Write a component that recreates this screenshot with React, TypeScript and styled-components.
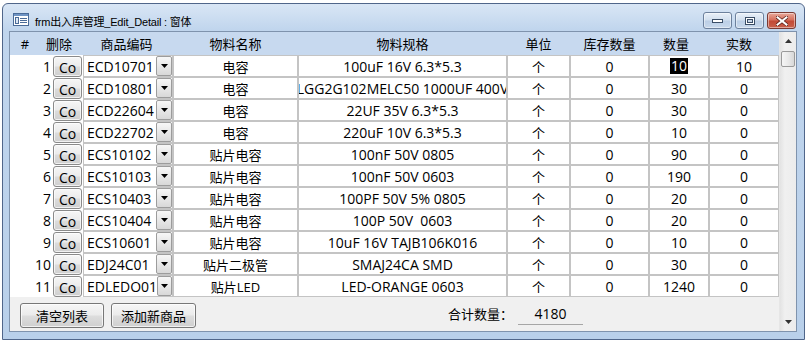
import React from "react";
import styled, { createGlobalStyle } from "styled-components";

const GlobalStyle = createGlobalStyle`
  html, body {
    margin: 0;
    padding: 0;
    background: #ffffff;
  }
  body {
    font-family: "Open Sans", "Noto Sans CJK SC", sans-serif;
    color: #000;
  }
`;

const FONT = `"Open Sans", "Noto Sans CJK SC", sans-serif`;

const Page = styled.div`
  width: 809px;
  height: 342px;
  box-sizing: border-box;
  padding: 3px 0 0 2px;
  overflow: hidden;
  background: #fff;
`;

const Window = styled.div`
  width: 803px;
  height: 337px;
  box-sizing: border-box;
  border: 1px solid #50668a;
  border-radius: 6px 6px 0 0;
  background: linear-gradient(to bottom, #d9e6f5 0px, #c0d5ed 26px, #b9d0ea 100%);
  padding: 0 7px 7px 6px;
  display: flex;
  flex-direction: column;
`;

const TitleBar = styled.div`
  height: 27px;
  display: flex;
  align-items: flex-start;
  padding-left: 4px;
`;

const TitleIcon = styled.svg`
  margin-top: 9px;
  flex: none;
`;

const TitleText = styled.div`
  font-family: "Liberation Sans", "Noto Sans CJK SC", sans-serif;
  font-size: 11px;
  letter-spacing: -0.2px;
  line-height: 16px;
  margin-top: 10px;
  margin-left: 6px;
  color: #000;
  flex: 1;
`;

const Controls = styled.div`
  display: flex;
  gap: 3px;
  margin-top: 8px;
  margin-right: 1px;
`;

const CtrlButton = styled.div<{ $close?: boolean }>`
  width: 29px;
  height: 17px;
  box-sizing: border-box;
  border: 1px solid ${(p) => (p.$close ? "#7a3a33" : "#6c809c")};
  border-radius: 3px;
  background: ${(p) =>
    p.$close
      ? "linear-gradient(to bottom, #e9a99b 0%, #d6705e 45%, #c24a36 55%, #c9604b 100%)"
      : "linear-gradient(to bottom, #e9f0f8 0%, #d3e0ef 45%, #bccfe6 55%, #c8d8eb 100%)"};
  box-shadow: inset 0 0 0 1px rgba(255, 255, 255, 0.45);
  display: flex;
  align-items: center;
  justify-content: center;
`;

const Client = styled.div`
  flex: 1;
  border: 1px solid #7f93ad;
  background: #f0f0f0;
  display: flex;
  overflow: hidden;
`;

const Main = styled.div`
  width: 769px;
  display: flex;
  flex-direction: column;
`;

const HeaderRow = styled.div`
  height: 23px;
  background: #c7d9ef;
  display: grid;
  grid-template-columns: 30px 38px 95px 125px 209px 63px 79px 60px 70px;
  align-items: center;
  font-size: 13px;
  line-height: 16px;
`;

const HeadCell = styled.div<{ $shift?: number }>`
  text-align: center;
  white-space: nowrap;
  transform: translateX(${(p) => p.$shift ?? 0}px);
`;

const Body = styled.div`
  background: #fff;
  display: flex;
  flex-direction: column;
`;

const Row = styled.div`
  height: 22px;
  display: grid;
  grid-template-columns: 42px 31px 90px 125px 209px 63px 79px 60px 70px;
`;

const NumCell = styled.div`
  display: flex;
  align-items: center;
  justify-content: flex-end;
  padding-right: 1px;
  font-size: 14px;
`;

const DelCell = styled.div`
  display: flex;
  align-items: center;
  padding-left: 1px;
`;

const CoButton = styled.div`
  width: 29px;
  height: 21px;
  box-sizing: border-box;
  border: 1px solid #8a8a8a;
  border-radius: 3px;
  background: linear-gradient(to bottom, #f6f6f6 0%, #ebebeb 48%, #dcdcdc 52%, #cfcfcf 100%);
  box-shadow: inset 0 0 0 1px rgba(255, 255, 255, 0.7);
  font-size: 14px;
  line-height: 19px;
  text-align: center;
  overflow: hidden;
  white-space: nowrap;
  padding-top: 1px;
`;

const Cell = styled.div<{ $cjk?: boolean }>`
  box-sizing: border-box;
  height: 22px;
  border: 1px solid #c4c4c4;
  display: flex;
  align-items: center;
  justify-content: center;
  white-space: pre;
  overflow: hidden;
  font-family: ${FONT};
  font-size: ${(p) => (p.$cjk ? "13px" : "14px")};
`;

const CodeCell = styled(Cell)`
  justify-content: flex-start;
`;

const CodeText = styled.div`
  flex: 1;
  padding-left: 3px;
`;

const DropBtn = styled.div`
  width: 16px;
  height: 20px;
  box-sizing: border-box;
  border: 1px solid #9c9c9c;
  border-radius: 2px;
  background: linear-gradient(to bottom, #f7f7f7 0%, #e8e8e8 50%, #d8d8d8 100%);
  display: flex;
  align-items: center;
  justify-content: center;
`;

const Selected = styled.span`
  background: #000;
  color: #fff;
  line-height: 16px;
  padding: 0 1px;
`;

const Footer = styled.div`
  flex: 1;
  display: flex;
  align-items: flex-start;
  padding: 6px 0 0 10px;
  background: #f0f0f0;
`;

const FormButton = styled.div<{ $w: number }>`
  width: ${(p) => p.$w}px;
  height: 25px;
  box-sizing: border-box;
  border: 1px solid #777;
  border-radius: 3px;
  background: linear-gradient(to bottom, #f6f6f6 0%, #ebebeb 48%, #dddddd 52%, #cfcfcf 100%);
  box-shadow: inset 0 0 0 1px rgba(255, 255, 255, 0.7);
  font-size: 13px;
  display: flex;
  align-items: center;
  justify-content: center;
  margin-right: 7px;
`;

const TotalLabel = styled.div`
  margin-left: 245px;
  height: 22px;
  line-height: 22px;
  font-size: 13px;
`;

const TotalValue = styled.div`
  width: 65px;
  height: 22px;
  box-sizing: border-box;
  margin-left: 5px;
  border-bottom: 1px solid #a6a6a6;
  font-size: 14px;
  display: flex;
  align-items: center;
  justify-content: center;
`;

const ScrollBar = styled.div`
  width: 17px;
  display: flex;
  flex-direction: column;
  background: linear-gradient(to right, #e3e3e3 0%, #f0f0f0 30%, #ececec 100%);
  border-left: 1px solid #e6e6e6;
  box-sizing: border-box;
`;

const ScrollArrow = styled.div`
  height: 18px;
  display: flex;
  align-items: center;
  justify-content: center;
`;

const Thumb = styled.div`
  height: 16px;
  margin: 1px 1px 0 1px;
  box-sizing: border-box;
  border: 1px solid #9a9a9a;
  border-radius: 2px;
  background: linear-gradient(to right, #f5f5f5 0%, #e9e9e9 50%, #d8d8d8 100%);
`;

const Track = styled.div`
  flex: 1;
`;

type Item = {
  code: string;
  name: string;
  spec: string;
  stock: string;
  qty: string;
  real: string;
};

const items: Item[] = [
  { code: "ECD10701", name: "电容", spec: "100uF 16V 6.3*5.3", stock: "0", qty: "10", real: "10" },
  { code: "ECD10801", name: "电容", spec: "LGG2G102MELC50 1000UF 400V", stock: "0", qty: "30", real: "0" },
  { code: "ECD22604", name: "电容", spec: "22UF 35V 6.3*5.3", stock: "0", qty: "30", real: "0" },
  { code: "ECD22702", name: "电容", spec: "220uF 10V 6.3*5.3", stock: "0", qty: "10", real: "0" },
  { code: "ECS10102", name: "贴片电容", spec: "100nF 50V 0805", stock: "0", qty: "90", real: "0" },
  { code: "ECS10103", name: "贴片电容", spec: "100nF 50V 0603", stock: "0", qty: "190", real: "0" },
  { code: "ECS10403", name: "贴片电容", spec: "100PF 50V 5% 0805", stock: "0", qty: "20", real: "0" },
  { code: "ECS10404", name: "贴片电容", spec: "100P 50V  0603", stock: "0", qty: "20", real: "0" },
  { code: "ECS10601", name: "贴片电容", spec: "10uF 16V TAJB106K016", stock: "0", qty: "10", real: "0" },
  { code: "EDJ24C01", name: "贴片二极管", spec: "SMAJ24CA SMD", stock: "0", qty: "30", real: "0" },
  { code: "EDLEDO01", name: "贴片LED", spec: "LED-ORANGE 0603", stock: "0", qty: "1240", real: "0" },
];

const headers: { label: string; shift?: number }[] = [
  { label: "#" },
  { label: "删除" },
  { label: "商品编码", shift: 1 },
  { label: "物料名称" },
  { label: "物料规格" },
  { label: "单位" },
  { label: "库存数量" },
  { label: "数量", shift: -3 },
  { label: "实数", shift: -5 },
];

function FormIcon() {
  return (
    <TitleIcon width="16" height="13" viewBox="0 0 16 13">
      <rect x="0.5" y="0.5" width="15" height="12" fill="#ffffff" stroke="#4a6b98" />
      <rect x="1" y="1" width="14" height="2" fill="#6f94c4" />
      <rect x="2.5" y="4.5" width="3" height="6" fill="#dfe8f4" stroke="#4a6b98" />
      <line x1="7" y1="5.5" x2="14" y2="5.5" stroke="#4a6b98" />
      <line x1="7" y1="7.5" x2="14" y2="7.5" stroke="#4a6b98" />
      <line x1="7" y1="9.5" x2="14" y2="9.5" stroke="#4a6b98" />
    </TitleIcon>
  );
}

function Triangle({ dir = "down", color = "#000" }: { dir?: "up" | "down"; color?: string }) {
  return (
    <svg width="7" height="4" viewBox="0 0 7 4">
      {dir === "down" ? (
        <polygon points="0,0 7,0 3.5,4" fill={color} />
      ) : (
        <polygon points="0,4 7,4 3.5,0" fill={color} />
      )}
    </svg>
  );
}

export default function App() {
  return (
    <>
      <GlobalStyle />
      <Page>
        <Window>
          <TitleBar>
            <FormIcon />
            <TitleText>frm出入库管理_Edit_Detail : 窗体</TitleText>
            <Controls>
              <CtrlButton>
                <svg width="11" height="4" viewBox="0 0 11 4">
                  <rect x="0.5" y="0.5" width="10" height="3" fill="#fff" stroke="#3a4d66" />
                </svg>
              </CtrlButton>
              <CtrlButton>
                <svg width="10" height="8" viewBox="0 0 10 8">
                  <rect x="0.5" y="0.5" width="9" height="7" fill="#fff" stroke="#3a4d66" />
                  <rect x="2.5" y="2.5" width="5" height="3" fill="#c7d6e8" stroke="#3a4d66" />
                </svg>
              </CtrlButton>
              <CtrlButton $close>
                <svg width="12" height="10" viewBox="0 0 12 10">
                  <path
                    d="M1 1 L11 9 M11 1 L1 9"
                    stroke="#5a1f18"
                    strokeWidth="3.4"
                    strokeLinecap="square"
                  />
                  <path
                    d="M1.5 1.4 L10.5 8.6 M10.5 1.4 L1.5 8.6"
                    stroke="#ffffff"
                    strokeWidth="2"
                    strokeLinecap="square"
                  />
                </svg>
              </CtrlButton>
            </Controls>
          </TitleBar>
          <Client>
            <Main>
              <HeaderRow>
                {headers.map((h) => (
                  <HeadCell key={h.label} $shift={h.shift}>
                    {h.label}
                  </HeadCell>
                ))}
              </HeaderRow>
              <Body>
                {items.map((it, i) => (
                  <Row key={it.code}>
                    <NumCell>{i + 1}</NumCell>
                    <DelCell>
                      <CoButton>Co</CoButton>
                    </DelCell>
                    <CodeCell>
                      <CodeText>{it.code}</CodeText>
                      <DropBtn>
                        <Triangle />
                      </DropBtn>
                    </CodeCell>
                    <Cell $cjk>{it.name}</Cell>
                    <Cell>{it.spec}</Cell>
                    <Cell $cjk>个</Cell>
                    <Cell>{it.stock}</Cell>
                    <Cell>{i === 0 ? <Selected>{it.qty}</Selected> : it.qty}</Cell>
                    <Cell>{it.real}</Cell>
                  </Row>
                ))}
              </Body>
              <Footer>
                <FormButton $w={84}>清空列表</FormButton>
                <FormButton $w={85}>添加新商品</FormButton>
                <TotalLabel>合计数量：</TotalLabel>
                <TotalValue>4180</TotalValue>
              </Footer>
            </Main>
            <ScrollBar>
              <ScrollArrow>
                <Triangle dir="up" color="#333" />
              </ScrollArrow>
              <Thumb />
              <Track />
              <ScrollArrow>
                <Triangle color="#333" />
              </ScrollArrow>
            </ScrollBar>
          </Client>
        </Window>
      </Page>
    </>
  );
}
